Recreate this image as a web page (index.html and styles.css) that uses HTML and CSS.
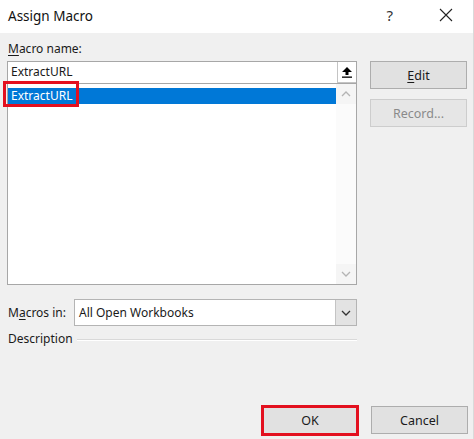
FILE: index.html
```html
<!DOCTYPE html>
<html lang="en">

<head>
    <meta charset="UTF-8">
    <meta name="viewport" content="width=device-width, initial-scale=1.0">
    <title>Assign Macro</title>
    <link rel="stylesheet" href="styles.css">
</head>

<body>

    <div class="dialog">
        <header class="titlebar">
            <span class="title">Assign Macro</span>
            <span class="help">?</span>
            <span class="close">
                <svg width="14" height="14" viewBox="0 0 14 14">
                    <path d="M1 1 L13 13 M13 1 L1 13" stroke="#222" stroke-width="1.1" fill="none"/>
                </svg>
            </span>
        </header>

        <section class="content">
            <div class="left-col">
                <div class="label"><u>M</u>acro name:</div>

                <div class="name-box">
                    <span class="name-text">ExtractURL</span>
                    <span class="upload-btn">
                        <svg width="12" height="12" viewBox="0 0 12 12">
                            <path d="M6 1 L11 6 L7.5 6 L7.5 9 L4.5 9 L4.5 6 L1 6 Z" fill="#000"/>
                            <rect x="1" y="10.5" width="10" height="1.3" fill="#000"/>
                        </svg>
                    </span>
                </div>

                <div class="macro-list">
                    <div class="list-items">
                        <div class="list-item selected">
                            <span class="marked">ExtractURL</span>
                        </div>
                    </div>
                    <div class="scrollbar">
                        <span class="scroll-arrow">
                            <svg width="10" height="6" viewBox="0 0 10 6">
                                <path d="M1 5 L5 1 L9 5" stroke="#b4b4b4" stroke-width="1.3" fill="none"/>
                            </svg>
                        </span>
                        <span class="scroll-track"></span>
                        <span class="scroll-arrow">
                            <svg width="10" height="6" viewBox="0 0 10 6">
                                <path d="M1 1 L5 5 L9 1" stroke="#b4b4b4" stroke-width="1.3" fill="none"/>
                            </svg>
                        </span>
                    </div>
                </div>

                <div class="macros-in-row">
                    <span class="label">M<u>a</u>cros in:</span>
                    <div class="combo">
                        <span class="combo-text">All Open Workbooks</span>
                        <span class="combo-btn">
                            <svg width="10" height="6" viewBox="0 0 10 6">
                                <path d="M1 1 L5 5 L9 1" stroke="#333" stroke-width="1.3" fill="none"/>
                            </svg>
                        </span>
                    </div>
                </div>

                <div class="description-row">
                    <span class="label">Description</span>
                    <span class="rule"></span>
                </div>
            </div>

            <div class="right-col">
                <button class="dlg-button"><u>E</u>dit</button>
                <button class="dlg-button disabled">Record...</button>
            </div>
        </section>

        <footer class="footer">
            <button class="dlg-button ok">OK</button>
            <button class="dlg-button">Cancel</button>
        </footer>
    </div>

</body>

</html>
```

FILE: styles.css
```css
html {
    box-sizing: border-box;
}

*,
*::before,
*::after {
    box-sizing: inherit;
    margin: 0;
    padding: 0;
}

body {
    background: #f0f0f0;
    color: #1a1a1a;
    font-family: 'Noto Sans', 'Open Sans', sans-serif;
    font-size: 12px;
    height: 439px;
    width: 474px;
    overflow: hidden;
}

u {
    text-decoration-thickness: 1px;
    text-underline-offset: 2px;
}

.dialog {
    display: flex;
    flex-direction: column;
    height: 100%;
    border-right: 1px solid #dadada;
}

.titlebar {
    align-items: center;
    background: #fff;
    display: flex;
    height: 33px;
    padding-left: 8px;
}

.title {
    flex: 1;
    font-size: 13.5px;
    color: #111;
    padding-bottom: 2px;
}

.help {
    color: #333;
    font-size: 15px;
    margin-right: 46px;
    padding-bottom: 4px;
}

.close {
    display: flex;
    margin-right: 20px;
    padding-bottom: 3px;
}

.content {
    display: flex;
    gap: 13px;
    padding: 7px 6px 0 7px;
}

.left-col {
    display: flex;
    flex-direction: column;
    width: 352px;
}

.right-col {
    display: flex;
    flex-direction: column;
    gap: 10px;
    padding-top: 21px;
    width: 97px;
}

.label {
    color: #1a1a1a;
    line-height: 17px;
    padding-left: 1px;
}

.name-box {
    align-items: stretch;
    background: #fff;
    border: 1px solid #a7a7a7;
    border-bottom: none;
    display: flex;
    height: 22px;
    margin-top: 4px;
}

.name-text {
    flex: 1;
    line-height: 20px;
    padding-left: 3px;
}

.upload-btn {
    align-items: center;
    border-left: 1px solid #c4c4c4;
    border-bottom: 1px solid #c4c4c4;
    display: flex;
    justify-content: center;
    width: 19px;
}

.macro-list {
    background: #fff;
    border: 1px solid #a7a7a7;
    display: flex;
    height: 202px;
}

.list-items {
    flex: 1;
    padding-top: 4px;
}

.list-item {
    height: 16px;
    line-height: 16px;
    padding-left: 3px;
}

.list-item.selected {
    background: #0078d7;
    color: #fff;
}

.marked {
    position: relative;
}

.marked::after {
    border: 3px solid #e3101f;
    content: '';
    height: 26px;
    left: -8px;
    position: absolute;
    top: -6px;
    width: 76px;
}

.scrollbar {
    background: #fbfbfb;
    display: flex;
    flex-direction: column;
    width: 20px;
}

.scroll-arrow {
    align-items: center;
    background: #f5f5f5;
    display: flex;
    height: 20px;
    justify-content: center;
}

.scroll-track {
    flex: 1;
}

.macros-in-row {
    align-items: center;
    display: flex;
    margin-top: 14px;
}

.macros-in-row .label {
    width: 67px;
}

.combo {
    background: #fff;
    border: 1px solid #b4b4b4;
    display: flex;
    flex: 1;
    height: 27px;
}

.combo-text {
    flex: 1;
    line-height: 25px;
    padding-left: 4px;
}

.combo-btn {
    align-items: center;
    background: #e3e3e3;
    border-left: 1px solid #c4c4c4;
    display: flex;
    justify-content: center;
    width: 21px;
}

.description-row {
    align-items: center;
    display: flex;
    gap: 4px;
    margin-top: 4px;
}

.rule {
    border-top: 1px solid #d9d9d9;
    border-bottom: 1px solid #fff;
    flex: 1;
    margin-top: 2px;
}

.dlg-button {
    background: #e1e1e1;
    border: 1px solid #adadad;
    color: #1a1a1a;
    font-family: inherit;
    font-size: 12.5px;
    height: 28px;
    width: 97px;
}

.dlg-button.disabled {
    background: #e6e6e6;
    border-color: #cdcdcd;
    color: #8a8a8a;
}

.footer {
    align-items: flex-start;
    display: flex;
    gap: 12px;
    justify-content: flex-end;
    margin-top: auto;
    padding: 0 5px 3px 0;
}

.dlg-button.ok {
    border: 3px solid #e3101f;
    height: 31px;
    margin-top: -1px;
    width: 98px;
}
```
